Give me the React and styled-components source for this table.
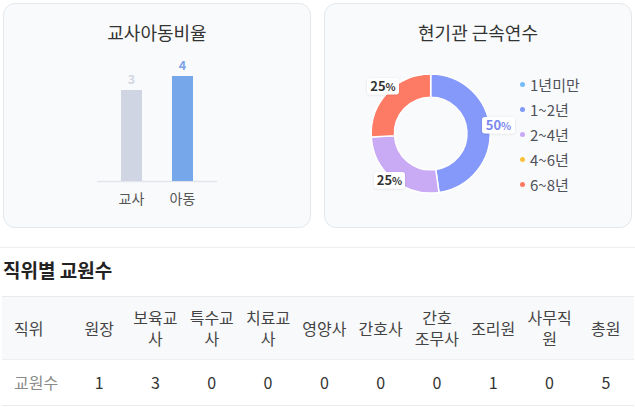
import React from 'react'
import styled, {createGlobalStyle} from 'styled-components'

const GlobalStyle = createGlobalStyle`
  body {
    margin: 0;
    background: #ffffff;
    font-family: "Noto Sans CJK KR", "Noto Sans", sans-serif;
    color: #333333;
  }
`

const Page = styled.div`
  width: 635px;
  padding-top: 3px;
`

const ChartsRow = styled.div`
  display: grid;
  grid-template-columns: 1fr 1fr;
  gap: 13px;
  padding: 0 3px;
`

const Card = styled.div`
  height: 225px;
  box-sizing: border-box;
  border: 1px solid #e4e7ec;
  border-radius: 12px;
  background: #f9fafc;
  display: flex;
  flex-direction: column;
  overflow: hidden;
`

const CardTitle = styled.div`
  padding-top: 16px;
  height: 24px;
  line-height: 24px;
  font-size: 18px;
  text-align: center;
  color: #333333;
`

const ChartBody = styled.div`
  display: flex;
  align-items: flex-start;
`

const Legend = styled.ul`
  list-style: none;
  margin: 0;
  padding: 28px 0 0 0;
`

const LegendItem = styled.li`
  display: flex;
  align-items: center;
  gap: 5px;
  height: 25px;
  font-size: 15px;
  color: #50525a;
`

const Dot = styled.span`
  width: 5px;
  height: 5px;
  border-radius: 50%;
  background: ${p => p.color};
`

const Divider = styled.div`
  margin-top: 19px;
  border-top: 1px solid #eeeeee;
`

const SectionTitle = styled.h3`
  margin: 9px 0 13px 3px;
  line-height: 26px;
  font-size: 19px;
  font-weight: 700;
  color: #222222;
`

const Table = styled.table`
  width: 632px;
  margin-left: 2px;
  table-layout: fixed;
  border-collapse: collapse;
  font-size: 16px;
`

const HeadCell = styled.th`
  background: #f8f9fb;
  font-weight: 400;
  color: #444444;
  line-height: 21px;
  padding: 10px 5px;
  text-align: ${p => (p.$first ? 'left' : 'center')};
  padding-left: ${p => (p.$first ? '12px' : '5px')};
  border-top: 1px solid #e8e9ec;
  border-bottom: 1px solid #eeeff2;
`

const BodyCell = styled.td`
  line-height: 21px;
  padding: 12px 5px;
  text-align: ${p => (p.$first ? 'left' : 'center')};
  padding-left: ${p => (p.$first ? '12px' : '5px')};
  color: ${p => (p.$first ? '#8a8a8a' : '#333333')};
  border-bottom: 1px solid #e8e9ec;
`

const legendItems = [
  {label: '1년미만', color: '#74bdf8'},
  {label: '1~2년', color: '#8098f8'},
  {label: '2~4년', color: '#c9a9f5'},
  {label: '4~6년', color: '#f9c23c'},
  {label: '6~8년', color: '#fc7a64'}
]

const columns = ['원장', '보육교사', '특수교사', '치료교사', '영양사', '간호사', '간호 조무사', '조리원', '사무직원', '총원']
const counts = [1, 3, 0, 0, 0, 0, 0, 1, 0, 5]

// bar chart, coords relative to card body
const BarChart = () => (
  <svg width="306" height="180">
    <line x1="93" y1="137.5" x2="213" y2="137.5" stroke="#e3e6ec" strokeWidth="1.5" />
    <rect x="117" y="46" width="21" height="91" fill="#cfd5e2" />
    <rect x="168" y="32" width="21" height="105" fill="#77a7eb" />
    <text x="127.5" y="40" textAnchor="middle" fontSize="12.5" fontWeight="700" fill="#d3d8e3">3</text>
    <text x="178.5" y="26" textAnchor="middle" fontSize="12.5" fontWeight="700" fill="#7fa3e8">4</text>
    <text x="127.5" y="160" textAnchor="middle" fontSize="14" fill="#555">교사</text>
    <text x="178.5" y="160" textAnchor="middle" fontSize="14" fill="#555">아동</text>
  </svg>
)

const cx = 105.7
const cy = 89.5
const R = 59.5
const r = 36.3

function pt(rad, deg) {
  const a = (deg * Math.PI) / 180
  return [cx + rad * Math.sin(a), cy - rad * Math.cos(a)]
}

function arc(start, end) {
  const large = end - start > 180 ? 1 : 0
  const [x1, y1] = pt(R, start)
  const [x2, y2] = pt(R, end)
  const [x3, y3] = pt(r, end)
  const [x4, y4] = pt(r, start)
  return `M${x1} ${y1} A${R} ${R} 0 ${large} 1 ${x2} ${y2} L${x3} ${y3} A${r} ${r} 0 ${large} 0 ${x4} ${y4} Z`
}

const slices = [
  {start: 0, end: 172, color: '#8599fb'},
  {start: 172, end: 266.6, color: '#c9aaf5'},
  {start: 266.6, end: 360, color: '#fd7b65'}
]

const labels = [
  {x: 42, y: 34, w: 32, value: '25', color: '#333'},
  {x: 157, y: 73, w: 33, value: '50', color: '#7b87f0'},
  {x: 49, y: 128, w: 31, value: '25', color: '#333'}
]

const Donut = () => (
  <svg width="195" height="180">
    <defs>
      <filter id="lblShadow" x="-30%" y="-40%" width="160%" height="180%">
        <feDropShadow dx="0" dy="0.5" stdDeviation="1" floodColor="#000" floodOpacity="0.12" />
      </filter>
    </defs>
    {slices.map(s => (
      <path key={s.start} d={arc(s.start, s.end)} fill={s.color} stroke="#ffffff" strokeWidth="1.5" />
    ))}
    {labels.map(l => (
      <g key={l.x}>
        <rect x={l.x} y={l.y} width={l.w} height="16.5" rx="3" fill="#ffffff" filter="url(#lblShadow)" />
        <text x={l.x + l.w / 2} y={l.y + 13} textAnchor="middle" fontSize="13" fontWeight="600" fill={l.color}>
          {l.value}<tspan fontSize="10.5">%</tspan>
        </text>
      </g>
    ))}
  </svg>
)

const App = () => (
  <Page>
    <GlobalStyle />
    <ChartsRow>
      <Card>
        <CardTitle>교사아동비율</CardTitle>
        <ChartBody>
          <BarChart />
        </ChartBody>
      </Card>
      <Card>
        <CardTitle>현기관 근속연수</CardTitle>
        <ChartBody>
          <Donut />
          <Legend>
            {legendItems.map(item => (
              <LegendItem key={item.label}>
                <Dot color={item.color} />
                {item.label}
              </LegendItem>
            ))}
          </Legend>
        </ChartBody>
      </Card>
    </ChartsRow>
    <Divider />
    <SectionTitle>직위별 교원수</SectionTitle>
    <Table>
      <colgroup>
        <col style={{width: '69px'}} />
      </colgroup>
      <thead>
        <tr>
          <HeadCell $first>직위</HeadCell>
          {columns.map(c => <HeadCell key={c}>{c}</HeadCell>)}
        </tr>
      </thead>
      <tbody>
        <tr>
          <BodyCell $first>교원수</BodyCell>
          {counts.map((n, i) => <BodyCell key={i}>{n}</BodyCell>)}
        </tr>
      </tbody>
    </Table>
  </Page>
)

export default App
